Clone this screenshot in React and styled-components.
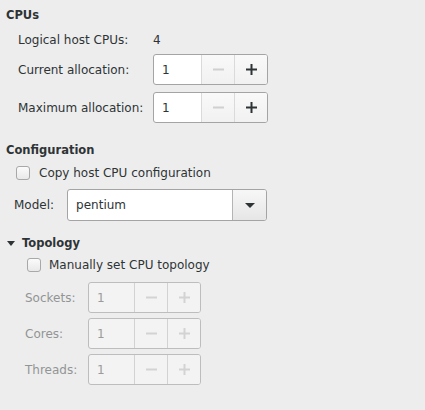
import React from 'react'
import styled, { createGlobalStyle } from 'styled-components'

const Global = createGlobalStyle`
  html, body {
    margin: 0;
    background: #ededed;
  }
  body {
    font-family: "DejaVu Sans", "Liberation Sans", sans-serif;
    font-size: 12px;
    color: #2e3436;
  }
`

const Page = styled.div`
  width: 425px;
  height: 410px;
  box-sizing: border-box;
  padding: 8px 6px 0 6px;
  display: flex;
  flex-direction: column;
`

const Title = styled.div`
  display: flex;
  align-items: center;
  gap: 7px;
  font-weight: bold;
  font-size: 11.5px;
  line-height: 15px;
  height: 15px;
  margin-top: ${(p) => p.$top || 0}px;
  padding-left: ${(p) => p.$indent || 0}px;
`

const Expander = styled.span`
  width: 0;
  height: 0;
  border-left: 4.5px solid transparent;
  border-right: 4.5px solid transparent;
  border-top: 5px solid #2e3436;
`

const Grid = styled.div`
  display: grid;
  grid-template-columns: ${(p) => p.$label}px auto;
  grid-template-rows: ${(p) => p.$rows};
  row-gap: ${(p) => p.$gap}px;
  align-items: center;
  margin-top: ${(p) => p.$top}px;
  padding-left: ${(p) => p.$indent}px;
`

const Label = styled.span`
  color: ${(p) => (p.$disabled ? '#929595' : '#2e3436')};
  line-height: 14px;
`

const Spin = styled.div`
  display: flex;
  width: ${(p) => p.$width}px;
  height: 31px;
  box-sizing: border-box;
  border: 1px solid ${(p) => (p.$disabled ? '#bdbdbd' : '#a4a4a4')};
  border-radius: 3px;
  overflow: hidden;
  background: ${(p) => (p.$disabled ? '#f3f3f3' : '#ffffff')};
`

const SpinValue = styled.div`
  flex: 1;
  display: flex;
  align-items: center;
  padding-left: 8px;
  color: ${(p) => (p.$disabled ? '#9a9c9c' : '#2e3436')};
`

const SpinButton = styled.div`
  width: 33px;
  display: flex;
  align-items: center;
  justify-content: center;
  border-left: 1px solid ${(p) => (p.$disabled ? '#d2d2d2' : '#dadada')};
  background: ${(p) => (p.$disabled ? '#f3f3f3' : 'linear-gradient(#f9f9f9, #f1f1f1)')};
  box-sizing: border-box;
`

const Sign = styled.svg`
  display: block;
`

const Minus = ({ color }) => (
  <Sign width="11" height="11" viewBox="0 0 11 11">
    <rect x="0" y="4.5" width="11" height="2" fill={color} />
  </Sign>
)

const Plus = ({ color }) => (
  <Sign width="11" height="11" viewBox="0 0 11 11">
    <rect x="0" y="4.5" width="11" height="2" fill={color} />
    <rect x="4.5" y="0" width="2" height="11" fill={color} />
  </Sign>
)

const SpinBox = ({ value, width, disabled }) => (
  <Spin $width={width} $disabled={disabled}>
    <SpinValue $disabled={disabled}>{value}</SpinValue>
    <SpinButton $disabled={disabled}>
      <Minus color={disabled ? '#d3d3d3' : '#d0d0d0'} />
    </SpinButton>
    <SpinButton $disabled={disabled}>
      <Plus color={disabled ? '#d3d3d3' : '#2e3436'} />
    </SpinButton>
  </Spin>
)

const CheckRow = styled.label`
  display: flex;
  align-items: center;
  gap: ${(p) => p.$gap}px;
  height: 14px;
  margin-top: ${(p) => p.$top}px;
  padding-left: ${(p) => p.$indent}px;
`

const Box = styled.span`
  width: 14px;
  height: 14px;
  box-sizing: border-box;
  border: 1px solid #a8a8a8;
  border-radius: 3px;
  background: linear-gradient(#fbfbfb, #e9e9e9);
`

const ModelRow = styled.div`
  display: flex;
  align-items: center;
  gap: 13px;
  height: 32px;
  margin-top: 9px;
  padding-left: 8px;
`

const Combo = styled.div`
  display: flex;
  width: 200px;
  height: 32px;
  box-sizing: border-box;
  border: 1px solid #a4a4a4;
  border-radius: 3px;
  overflow: hidden;
  background: #fff;
`

const ComboText = styled.div`
  flex: 1;
  display: flex;
  align-items: center;
  padding-left: 8px;
`

const ComboButton = styled.div`
  width: 33px;
  display: flex;
  align-items: center;
  justify-content: center;
  border-left: 1px solid #b4b4b4;
  background: linear-gradient(#f7f7f7, #e6e6e6);
`

const Arrow = styled.span`
  width: 0;
  height: 0;
  border-left: 5px solid transparent;
  border-right: 5px solid transparent;
  border-top: 5px solid #2e3436;
`

export default function App() {
  return (
    <>
      <Global />
      <Page>
        <Title>CPUs</Title>
        <Grid $label={135} $rows="14px 31px 31px" $gap={7} $top={10} $indent={12}>
          <Label>Logical host CPUs:</Label>
          <Label>4</Label>
          <Label>Current allocation:</Label>
          <SpinBox value="1" width={115} />
          <Label>Maximum allocation:</Label>
          <SpinBox value="1" width={115} />
        </Grid>

        <Title $top={20}>Configuration</Title>
        <CheckRow $top={8} $indent={10} $gap={9}>
          <Box />
          Copy host CPU configuration
        </CheckRow>
        <ModelRow>
          <Label>Model:</Label>
          <Combo>
            <ComboText>pentium</ComboText>
            <ComboButton>
              <Arrow />
            </ComboButton>
          </Combo>
        </ModelRow>

        <Title $top={15} $indent={1}>
          <Expander />
          Topology
        </Title>
        <CheckRow $top={7} $indent={21} $gap={8}>
          <Box />
          Manually set CPU topology
        </CheckRow>
        <Grid $label={63} $rows="31px 31px 31px" $gap={5} $top={10} $indent={19}>
          <Label $disabled>Sockets:</Label>
          <SpinBox value="1" width={113} disabled />
          <Label $disabled>Cores:</Label>
          <SpinBox value="1" width={113} disabled />
          <Label $disabled>Threads:</Label>
          <SpinBox value="1" width={113} disabled />
        </Grid>
      </Page>
    </>
  )
}
